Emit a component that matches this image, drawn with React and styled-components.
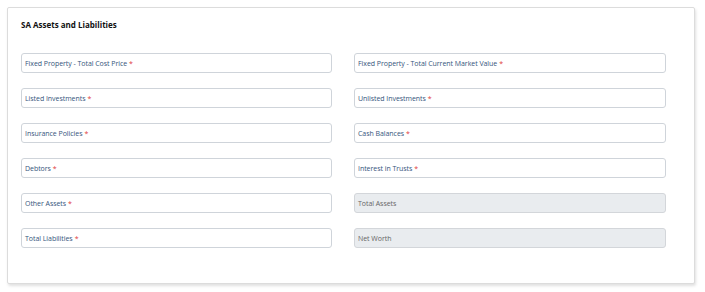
import React from 'react'
import styled, { createGlobalStyle } from 'styled-components'

const GlobalStyle = createGlobalStyle`
  body {
    margin: 0;
    background: #ffffff;
    font-family: "Open Sans", "Noto Sans", sans-serif;
  }
`

const Page = styled.div`
  padding: 7px 10px 9px 7px;
`

const Card = styled.div`
  border: 1px solid #dcdcdc;
  border-radius: 2px;
  box-shadow: 1px 2px 3px rgba(0, 0, 0, 0.12);
  padding: 12px 28px 35px 13px;
  background: #fff;
`

const Title = styled.h4`
  margin: 0 0 23px 0;
  font-size: 8px;
  font-weight: 700;
  color: #111;
  line-height: 10px;
`

const Grid = styled.div`
  display: grid;
  grid-template-columns: 311px 312px;
  column-gap: 22px;
  row-gap: 15px;
`

const Field = styled.div`
  height: 20px;
  box-sizing: border-box;
  border: 1px solid ${p => (p.$disabled ? '#d3d6da' : '#cfd4da')};
  border-radius: 3px;
  background: ${p => (p.$disabled ? '#e9ecef' : '#fff')};
  display: flex;
  align-items: center;
  padding: 0 3px;
  font-size: 7px;
  letter-spacing: -0.05px;
  color: ${p => (p.$disabled ? '#666' : '#35557c')};
`

const Star = styled.span`
  color: #e03a3a;
  margin-left: 2px;
`

const fields = [
  ['Fixed Property - Total Cost Price', true],
  ['Fixed Property - Total Current Market Value', true],
  ['Listed Investments', true],
  ['Unlisted Investments', true],
  ['Insurance Policies', true],
  ['Cash Balances', true],
  ['Debtors', true],
  ['Interest in Trusts', true],
  ['Other Assets', true],
  ['Total Assets', false],
  ['Total Liabilities', true],
  ['Net Worth', false],
]

export default function App() {
  return (
    <Page>
      <GlobalStyle />
      <Card>
        <Title>SA Assets and Liabilities</Title>
        <Grid>
          {fields.map(([label, required]) => (
            <Field key={label} $disabled={!required}>
              {label}
              {required && <Star>*</Star>}
            </Field>
          ))}
        </Grid>
      </Card>
    </Page>
  )
}
